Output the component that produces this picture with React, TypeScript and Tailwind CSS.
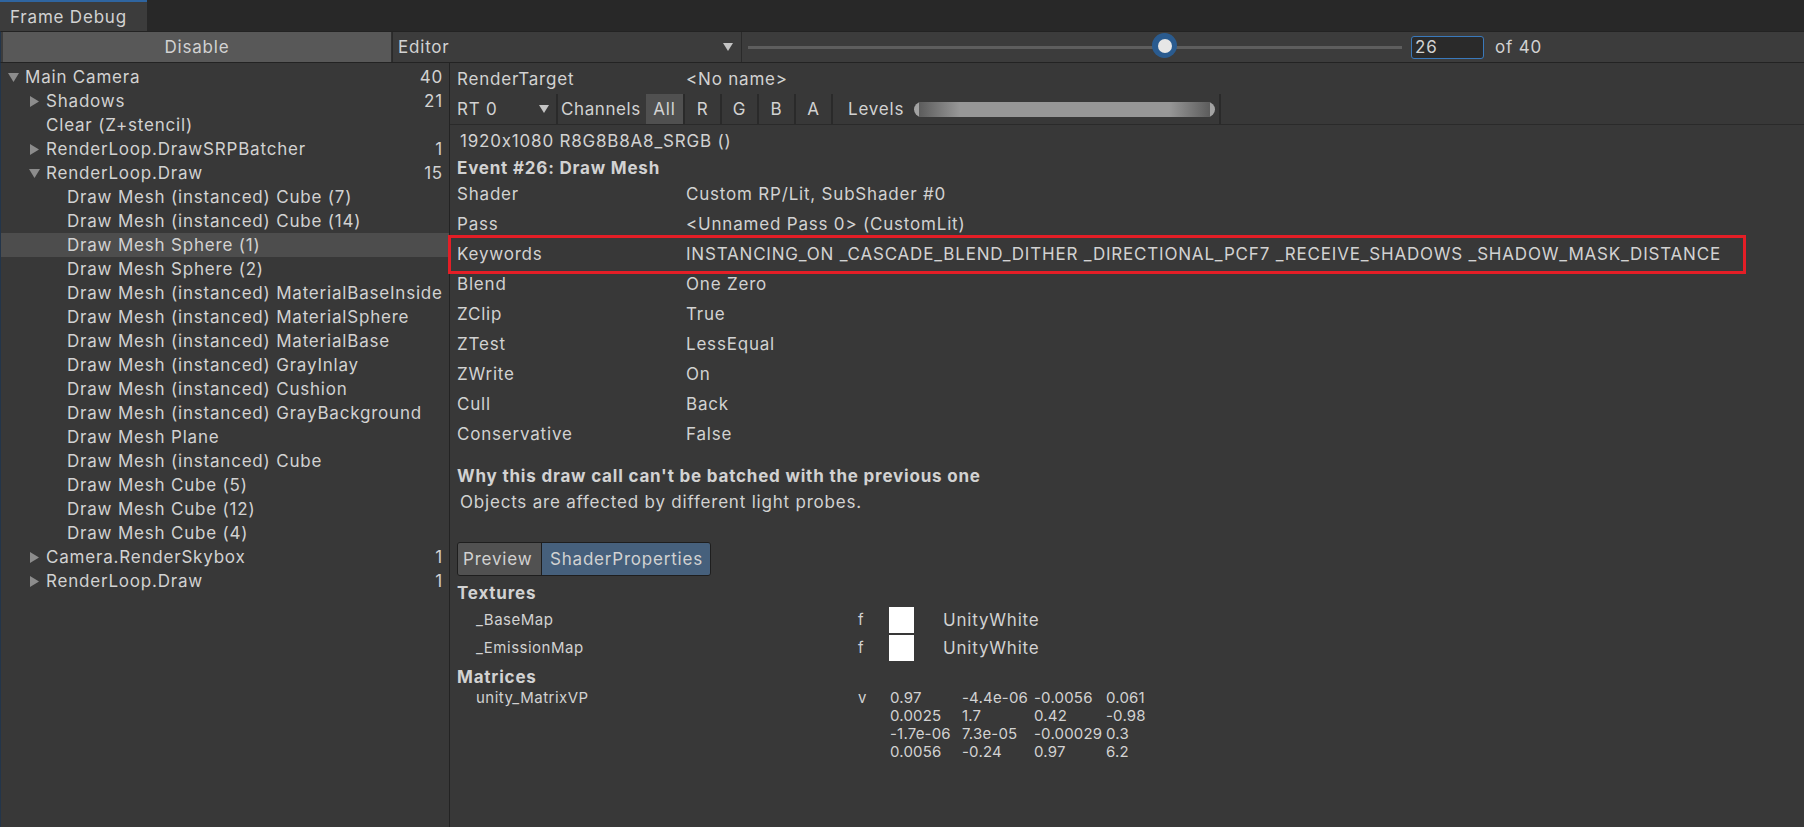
import React from 'react'

type Node = { label: string; level: number; arrow?: 'down' | 'right'; count?: number }

const tree: Node[] = [
    { label: 'Main Camera', level: 0, arrow: 'down', count: 40 },
    { label: 'Shadows', level: 1, arrow: 'right', count: 21 },
    { label: 'Clear (Z+stencil)', level: 1 },
    { label: 'RenderLoop.DrawSRPBatcher', level: 1, arrow: 'right', count: 1 },
    { label: 'RenderLoop.Draw', level: 1, arrow: 'down', count: 15 },
    { label: 'Draw Mesh (instanced) Cube (7)', level: 2 },
    { label: 'Draw Mesh (instanced) Cube (14)', level: 2 },
    { label: 'Draw Mesh Sphere (1)', level: 2 },
    { label: 'Draw Mesh Sphere (2)', level: 2 },
    { label: 'Draw Mesh (instanced) MaterialBaseInside', level: 2 },
    { label: 'Draw Mesh (instanced) MaterialSphere', level: 2 },
    { label: 'Draw Mesh (instanced) MaterialBase', level: 2 },
    { label: 'Draw Mesh (instanced) GrayInlay', level: 2 },
    { label: 'Draw Mesh (instanced) Cushion', level: 2 },
    { label: 'Draw Mesh (instanced) GrayBackground', level: 2 },
    { label: 'Draw Mesh Plane', level: 2 },
    { label: 'Draw Mesh (instanced) Cube', level: 2 },
    { label: 'Draw Mesh Cube (5)', level: 2 },
    { label: 'Draw Mesh Cube (12)', level: 2 },
    { label: 'Draw Mesh Cube (4)', level: 2 },
    { label: 'Camera.RenderSkybox', level: 1, arrow: 'right', count: 1 },
    { label: 'RenderLoop.Draw', level: 1, arrow: 'right', count: 1 },
]

const props: [string, string][] = [
    ['Shader', 'Custom RP/Lit, SubShader #0'],
    ['Pass', '<Unnamed Pass 0> (CustomLit)'],
    ['Keywords', 'INSTANCING_ON _CASCADE_BLEND_DITHER _DIRECTIONAL_PCF7 _RECEIVE_SHADOWS _SHADOW_MASK_DISTANCE'],
    ['Blend', 'One Zero'],
    ['ZClip', 'True'],
    ['ZTest', 'LessEqual'],
    ['ZWrite', 'On'],
    ['Cull', 'Back'],
    ['Conservative', 'False'],
]

const matrix = [
    ['0.97', '-4.4e-06', '-0.0056', '0.061'],
    ['0.0025', '1.7', '0.42', '-0.98'],
    ['-1.7e-06', '7.3e-05', '-0.00029', '0.3'],
    ['0.0056', '-0.24', '0.97', '6.2'],
]

const Arrow = ({ dir }: { dir: 'down' | 'right' }) =>
    dir === 'down' ? (
        <svg width="11" height="10" viewBox="0 0 11 10"><path d="M0 1h11L5.5 10z" fill="#8c8c8c" /></svg>
    ) : (
        <svg width="10" height="11" viewBox="0 0 10 11"><path d="M1 0v11l9-5.5z" fill="#8c8c8c" /></svg>
    )

const Sep = () => <div className="w-[2px] self-stretch bg-[#2a2a2a]" />

const App = () => {
    return (
        <div className="w-[1804px] h-[827px] bg-[#383838] flex flex-col overflow-hidden font-['Inter',sans-serif] text-[#d2d2d2] text-[17px] tracking-[0.8px]">
            {/* tab strip */}
            <div className="h-[31px] bg-[#282828] flex shrink-0">
                <div className="w-[147px] bg-[#3c3c3c] border-t-2 border-[#2f65a0] flex items-center pl-[10px] pt-[3px]">Frame Debug</div>
            </div>

            {/* toolbar */}
            <div className="h-[32px] bg-[#3c3c3c] border-y border-[#232323] flex items-center shrink-0 border-l border-l-[#23354a]">
                <div className="w-[389px] ml-[2px] h-full bg-[#585858] border-r border-[#303030] flex items-center justify-center pt-[2px]">Disable</div>
                <div className="w-[350px] h-full border-l border-r border-[#2a2a2a] flex items-center justify-between pl-[5px] pr-[8px]">
                    <span className="pt-[2px]">Editor</span>
                    <svg width="10" height="8" viewBox="0 0 10 8"><path d="M0 0h10L5 8z" fill="#c4c4c4" /></svg>
                </div>
                <div className="relative ml-[6px] w-[654px] h-full flex items-center">
                    <div className="w-full h-[3px] bg-[#5e5e5e]" />
                    <div className="absolute left-[404px] top-[1px] w-[25px] h-[25px] rounded-full bg-[#2a5b8f] flex items-center justify-center">
                        <div className="w-[14px] h-[14px] rounded-full bg-[#e6e6e6]" />
                    </div>
                </div>
                <div className="ml-[9px] w-[73px] h-[23px] rounded-[3px] border border-[#3a79bb] bg-[#2a2a2a] flex items-center pl-[3px] pt-[1px]">26</div>
                <span className="ml-[11px] pt-[2px]">of 40</span>
            </div>

            <div className="flex flex-1 min-h-0">
                {/* event tree */}
                <div className="w-[450px] shrink-0 border-r border-[#232323] border-l border-l-[#23354a] pt-[2px]">
                    {tree.map((n, i) => (
                        <div
                            key={i}
                            className={`h-[24px] flex items-center pr-[6px] ${i === 7 ? 'bg-[#4d4d4d]' : ''}`}
                            style={{ paddingLeft: 7 + n.level * 21 }}
                        >
                            <div className="w-[17px] flex items-center">{n.arrow && <Arrow dir={n.arrow} />}</div>
                            <span className="flex-1 whitespace-nowrap pt-[2px]">{n.label}</span>
                            {n.count !== undefined && <span className="pt-[2px]">{n.count}</span>}
                        </div>
                    ))}
                </div>

                {/* details */}
                <div className="flex-1 flex flex-col">
                    <div className="h-[31px] flex items-center pl-[7px] pt-[3px]">
                        <span className="w-[229px]">RenderTarget</span>
                        <span>&lt;No name&gt;</span>
                    </div>
                    <div className="h-[31px] flex items-stretch border-b border-[#2a2a2a] pl-[7px]">
                        <div className="w-[99px] flex items-center justify-between pr-[7px]">
                            <span className="pt-[2px]">RT 0</span>
                            <svg width="10" height="8" viewBox="0 0 10 8"><path d="M0 0h10L5 8z" fill="#c4c4c4" /></svg>
                        </div>
                        <Sep />
                        <div className="w-[88px] flex items-center pl-[3px] pt-[2px] whitespace-nowrap tracking-[0.6px]">Channels</div>
                        <div className="w-[37px] bg-[#505050] flex items-center justify-center pt-[2px]">All</div>
                        <Sep />
                        <div className="w-[35px] flex items-center justify-center pt-[2px]">R</div>
                        <Sep />
                        <div className="w-[35px] flex items-center justify-center pt-[2px]">G</div>
                        <Sep />
                        <div className="w-[35px] flex items-center justify-center pt-[2px]">B</div>
                        <Sep />
                        <div className="w-[35px] flex items-center justify-center pt-[2px]">A</div>
                        <Sep />
                        <div className="flex items-center pl-[15px] pr-[4px]">
                            <span className="w-[66px] pt-[2px]">Levels</span>
                            <div className="w-[301px] h-[15px] rounded-full bg-[#a3a3a3] px-[5px] flex">
                                <div className="flex-1 bg-[linear-gradient(to_right,#5c5c5c,#979797_14%,#979797_86%,#5c5c5c)]" />
                            </div>
                        </div>
                        <Sep />
                    </div>

                    <div className="mt-[2px] h-[30px] flex items-center pl-[10px]">1920x1080 R8G8B8A8_SRGB ()</div>
                    <div className="h-[23px] flex items-center pl-[7px] font-bold">Event #26: Draw Mesh</div>

                    {props.map(([k, v]) => (
                        <div key={k} className="relative h-[30px] flex items-center pl-[7px]">
                            <span className="w-[229px] shrink-0">{k}</span>
                            <span className="whitespace-nowrap">{v}</span>
                            {k === 'Keywords' && (
                                <div className="absolute left-[-2px] top-[-5px] w-[1298px] h-[39px] border-[3px] border-[#e41e26]" />
                            )}
                        </div>
                    ))}

                    <div className="h-[26px] mt-[14px] flex items-center pl-[7px] font-bold">Why this draw call can't be batched with the previous one</div>
                    <div className="h-[26px] flex items-center pl-[10px]">Objects are affected by different light probes.</div>

                    <div className="mt-[26px] ml-[7px] h-[34px] w-[254px] flex rounded-[3px] border border-[#1e1e1e] overflow-hidden">
                        <div className="w-[84px] bg-[#515151] flex items-center pl-[5px] pt-[2px] border-r border-[#1e1e1e]">Preview</div>
                        <div className="flex-1 bg-[#46607c] flex items-center pl-[8px] pt-[2px] whitespace-nowrap">ShaderProperties</div>
                    </div>

                    <div className="h-[31px] flex items-center pl-[7px] pt-[5px] font-bold">Textures</div>
                    {['_BaseMap', '_EmissionMap'].map((t) => (
                        <div key={t} className="h-[26px] mb-[2px] flex items-center">
                            <span className="w-[408px] pl-[26px] text-[15px] tracking-[0.5px]">{t}</span>
                            <span className="w-[31px] text-[15px]">f</span>
                            <div className="w-[25px] h-[26px] bg-white" />
                            <span className="ml-[29px] pt-[2px]">UnityWhite</span>
                        </div>
                    ))}
                    <div className="h-[26px] flex items-center pl-[7px] pt-[3px] font-bold">Matrices</div>
                    <div className="flex text-[15px] tracking-[0.5px] leading-[18px]">
                        <span className="w-[408px] pl-[26px]">unity_MatrixVP</span>
                        <span className="w-[32px]">v</span>
                        <div className="flex flex-col tracking-[0.2px]">
                            {matrix.map((row, r) => (
                                <div key={r} className="flex">
                                    {row.map((c, j) => (
                                        <span key={j} className="w-[72px] whitespace-nowrap">{c}</span>
                                    ))}
                                </div>
                            ))}
                        </div>
                    </div>
                </div>
            </div>
        </div>
    )
}

export default App
